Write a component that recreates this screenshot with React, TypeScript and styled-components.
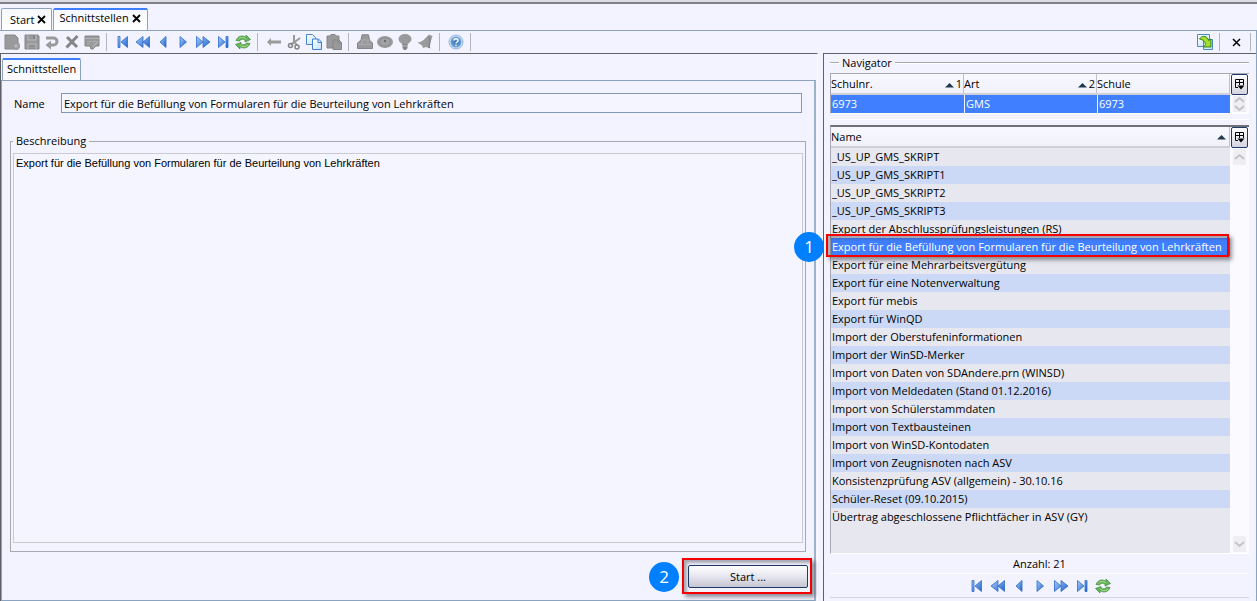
import React from "react";
import styled, { createGlobalStyle, css } from "styled-components";

const Global = createGlobalStyle`
  *, *::before, *::after { box-sizing: border-box; }
  body {
    margin: 0;
    background: #f3f3ff;
    color: #000;
    font: 11px/18px "Open Sans", "Noto Sans", "Liberation Sans", sans-serif;
  }
  button, input, textarea { font: inherit; color: inherit; border-radius: 0; }
`;

/* ---------- frame ---------- */

const Window = styled.div`
  display: flex;
  flex-direction: column;
  min-height: 100vh;
  border-top: 2px solid #dcdce4;
`;

const TabBar = styled.nav`
  display: flex;
  align-items: flex-end;
  gap: 1px;
  height: 28px;
  padding-left: 1px;
  border-top: 2px solid #80808a;
`;

const Tab = styled.div<{ $active?: boolean }>`
  display: flex;
  align-items: center;
  gap: 3px;
  height: 22px;
  padding: ${(p) => (p.$active ? "0 6px 4px 5px" : "2px 5px 2px 8px")};
  border: 1px solid #8ba3bf;
  border-bottom: 0;
  border-radius: 2px 2px 0 0;
  background: linear-gradient(#f7f8fc, #ffffff);
  ${(p) => p.$active && css`border-top: 2px solid #3d7dff;`}
`;

const PlainButton = styled.button`
  display: flex;
  align-items: center;
  justify-content: center;
  padding: 0;
  border: 0;
  background: none;
`;

const Main = styled.div`
  display: flex;
  flex-direction: column;
  flex: 1;
  border-top: 1px solid #8ba3bf;
  border-right: 1px solid #8ba3bf;
`;

const Toolbar = styled.div`
  display: flex;
  align-items: center;
  height: 22px;
  padding: 0 5px 0 2px;
`;

const ToolButton = styled(PlainButton)<{ $wide?: boolean }>`
  width: ${(p) => (p.$wide ? 21 : 20)}px;
  height: 20px;
`;

const Separator = styled.span`
  width: 1px;
  height: 18px;
  margin: 0 6px 0 4px;
  background: #b4b4bc;
  &:last-child { margin-right: 0; }
`;

const Spacer = styled.span`
  flex: 1;
`;

const Columns = styled.div`
  display: grid;
  grid-template-columns: minmax(0, 818fr) minmax(0, 433fr);
  flex: 1;
  gap: 5px;
`;

/* ---------- editor ---------- */

const Editor = styled.main`
  display: flex;
  flex-direction: column;
  padding: 4px 1px 0 0;
  border: solid #606068;
  border-width: 1px 0 0 1px;
  border-right: 1px solid #fff;
`;

const InnerTab = styled.div`
  align-self: flex-start;
  height: 22px;
  margin-left: 1px;
  padding: 0 4px;
  border: 1px solid #8ba3bf;
  border-top: 2px solid #3d7dff;
  border-bottom: 0;
  border-radius: 2px 2px 0 0;
  background: #fbfbff;
`;

const Form = styled.form`
  display: flex;
  flex-direction: column;
  flex: 1;
  padding: 12px 8px 6px;
  border: 1px solid #8ba3bf;
  border-right: 2px solid #9db1c8;
`;

const Field = styled.div`
  display: flex;
  align-items: center;
  padding: 0 4px;

  label { width: 47px; padding-top: 2px; }
  input {
    flex: 1;
    min-width: 0;
    height: 20px;
    padding: 0 2px;
    border: 1px solid #8099b8;
    background: #f5f5ff;
  }
`;

const Group = styled.fieldset`
  display: flex;
  flex-direction: column;
  flex: 1;
  min-width: 0;
  margin: 19px 0 7px;
  padding: 3px 2px 8px;
  border: 1px solid #a8a8b0;

  legend { padding: 0 3px; }
  textarea {
    display: block;
    flex: 1;
    width: 100%;
    resize: none;
    padding: 0 2px;
    border: 1px solid #cacad4;
    background: #f5f5ff;
    font-family: "Liberation Sans", "Noto Sans", sans-serif;
  }
`;

const Actions = styled.div`
  display: flex;
  justify-content: flex-end;
`;

const StartHolder = styled.div`
  position: relative;
  margin: 6px -2px 6px 0;
`;

const StartButton = styled.button`
  width: 120px;
  height: 23px;
  padding: 0;
  display: block;
  border: 1px solid #1f3a66;
  border-radius: 2px;
  background: linear-gradient(#ffffff, #e6e6f0 50%, #c6c6d2);
`;

/* ---------- callouts ---------- */

const Highlight = styled.span<{ $kind: "row" | "button" }>`
  position: absolute;
  z-index: 2;
  inset: ${(p) => (p.$kind === "row" ? "-4px 1px -1px -5px" : "-7px -4px -6px -6px")};
  border: 2px solid #f40000;
  box-shadow: 3px 3px 4px rgba(60, 60, 70, 0.55), inset 3px 3px 3px rgba(60, 60, 70, 0.4);
  pointer-events: none;
`;

const Badge = styled.span<{ $kind: "row" | "button" }>`
  position: absolute;
  z-index: 3;
  left: ${(p) => (p.$kind === "row" ? -37 : -39)}px;
  top: ${(p) => (p.$kind === "row" ? -6 : -3)}px;
  width: 30px;
  height: 30px;
  border-radius: 50%;
  background: #0080ff;
  color: #fff;
  font-size: 17px;
  line-height: 30px;
  text-align: center;
`;

/* ---------- navigator ---------- */

const Navigator = styled.aside`
  display: flex;
  flex-direction: column;
  padding: 0 7px 3px 6px;
  border: solid #606068;
  border-width: 1px 0 0 1px;
`;

const NavTitle = styled.h2`
  display: flex;
  align-items: center;
  gap: 3px;
  height: 17px;
  margin: 0 0 2px;
  font: inherit;

  &::before, &::after { content: ""; height: 2px; border-top: 1px solid #a8a8b0; background: #fff; }
  &::before { width: 9px; }
  &::after { flex: 1; }
`;

const GridFrame = styled.div<{ $grow?: boolean }>`
  display: flex;
  border: 1px solid #a8a8b0;
  border-right: 0;
  border-bottom-color: #fff;
  ${(p) =>
    p.$grow &&
    css`
      flex: 1;
      border-top: 2px solid #70707a;
      background: linear-gradient(#f3f3ff 21px, #e7e7f0 21px);
    `}
`;

const Divider = styled.hr`
  width: 100%;
  height: 1px;
  margin: 5px 0;
  border: 0;
  background: #fff;
`;

const Grid = styled.table`
  flex: 1;
  width: 100%;
  min-width: 0;
  align-self: flex-start;
  border-collapse: separate;
  border-spacing: 0;
  table-layout: fixed;

  th {
    height: 21px;
    padding: 1px 2px 0 0;
    border-bottom: 2px solid #d0d0da;
    background: linear-gradient(#f8f8ff, #f1f1fb);
    font-weight: 400;
    text-align: left;
    box-shadow: inset -1px 0 #c0c0c8;
  }
`;

const HeadCell = styled.span`
  display: flex;
  align-items: center;
  justify-content: space-between;
  height: 18px;
  svg { margin-right: 2px; }
`;

const Row = styled.tr<{ $selected?: boolean }>`
  background: #e7e7f0;
  &:nth-child(even) { background: #ccd9f6; }
  td { position: relative; height: 18px; padding: 0 1px; white-space: nowrap; }
  td + td { border-left: 1px solid #f3f3ff; }
  ${(p) => p.$selected && css`&&, &&:nth-child(even) { background: #407fff; color: #fff; }`}
`;

const Gutter = styled.div`
  display: flex;
  flex-direction: column;
  align-items: center;
  width: 19px;
  background: #fafaff;
`;

const ColumnButton = styled(PlainButton)`
  width: 17px;
  height: 21px;
  border: 1px solid #1f3a66;
  border-radius: 2px;
  background: linear-gradient(#ffffff, #d4d4e0);
`;

const ScrollArrows = styled.div`
  display: flex;
  flex: 1;
  flex-direction: column;
  justify-content: space-between;
  padding: 1px 0;
`;

const ScrollButton = styled(PlainButton)<{ $small?: boolean }>`
  width: 13px;
  height: ${(p) => (p.$small ? 8 : 16)}px;
  background: #efeff2;
`;

const Count = styled.div`
  height: 20px;
  border-bottom: 1px solid #fff;
  line-height: 20px;
  text-align: center;
`;

const Pager = styled.div`
  display: flex;
  justify-content: center;
  padding: 2px 0 1px;
  border-bottom: 1px solid #d4d4e0;
`;

/* ---------- icons ---------- */

const Svg = ({ children }: { children: React.ReactNode }) => (
  <svg width="16" height="16" viewBox="0 0 16 16" fill="none" aria-hidden="true">
    {children}
  </svg>
);

const GradientDefs = styled.svg`
  position: absolute;
`;

const Gradients = () => (
  <GradientDefs width="0" height="0" aria-hidden="true">
    <defs>
      <linearGradient id="blue" x1="0" x2="1" y1="0" y2="1">
        <stop offset="0" stopColor="#a9cdf5" />
        <stop offset="1" stopColor="#1c62cf" />
      </linearGradient>
      <linearGradient id="page" x1="0" x2="1" y1="0" y2="1">
        <stop offset="0" stopColor="#ffffff" />
        <stop offset="1" stopColor="#bfe0fb" />
      </linearGradient>
      <radialGradient id="ball">
        <stop offset="0" stopColor="#2f6fb5" />
        <stop offset="1" stopColor="#6fa3d8" />
      </radialGradient>
    </defs>
  </GradientDefs>
);

const Blue = ({ d }: { d: string }) => (
  <Svg><path d={d} fill="url(#blue)" stroke="#2c6ccb" strokeWidth="0.8" strokeLinejoin="round" /></Svg>
);

const G = "#9a9a9c";
const D = "#858587";

const icons: Record<string, React.ReactNode> = {
  neu: <Svg><path d="M1 1h10l3 3v6h-4v5H1z" fill={G} stroke={D} /><circle cx="12" cy="12" r="4" fill={G} /><path d="M12 10v4M10 12h4" stroke="#c4c4c8" /></Svg>,
  speichern: <Svg><path d="M1 1h13l1 1v13H1z" fill={G} stroke={D} /><path d="M4 1v5h8V1M4 15v-5h8v5" stroke="#b8b8bc" /><path d="M10 2v3" stroke={D} strokeWidth="2" /><path d="M5 12h6" stroke={D} /></Svg>,
  zurück: <Svg><path d="M2 4h7.500a3.500 3.500 0 0 1 0 7H6" stroke={G} strokeWidth="3" /><path d="M7 6.500v9L1.500 11z" fill={G} /></Svg>,
  löschen: <Svg><path d="M3 3 13 13M13.500 2 2.500 13.500" stroke={D} strokeWidth="3" /></Svg>,
  bearbeiten: <Svg><path d="M1 2h14v10h-3l-3 3H7l-1-3H1z" fill={G} stroke={D} /><path d="M1 4.500h14M3 7.500h4M3 10h3M8 7.500h4" stroke="#b0b0b4" /><path d="m9 13 5-6" stroke="#b0b0b4" strokeWidth="1.500" /></Svg>,
  erster: <Blue d="M3 2.500h2v11H3zM12.500 2.500v11L6 8z" />,
  schnellZurück: <Blue d="M8 2.500v11L1 8zM14.500 2.500v11L8 8z" />,
  vorheriger: <Blue d="M11 2.500v11L5 8z" />,
  nächster: <Blue d="M5 2.500v11L11.500 8z" />,
  schnellVor: <Blue d="M1.500 2.500v11L8 8zM8 2.500v11L15 8z" />,
  letzter: <Blue d="M3.500 2.500v11L10 8zM11 2.500h2v11h-2z" />,
  aktualisieren: <Svg><path d="M1 6.500C3 1.500 8 1 11 3.500V1l4.500 4.500L10 8V6C8 4.500 5.500 5 4.500 7zM15 9.500c-2 5-7 5.500-10 3V15L.500 10.500 6 8.500V10c2 1.500 4.500 1 5.500-1z" fill="#69b55b" stroke="#388735" strokeWidth="0.700" /><path d="M3 5.500C5.500 2.500 8.500 3 11 5M13 11c-2.500 2.500-5.500 2-8 0" stroke="#a2dc90" /></Svg>,
  links: <Svg><path d="M1 8l4-4v2.500h10v3H5V12z" fill={G} /></Svg>,
  ausschneiden: <Svg><path d="M8 1v7l-3 3M14 4 6 10M8 8l3 3" stroke={G} strokeWidth="2" /><circle cx="4.500" cy="11.500" r="2" stroke={D} strokeWidth="1.500" /><circle cx="11" cy="13" r="2" stroke={D} strokeWidth="1.500" /></Svg>,
  kopieren: <Svg><path d="M.500.500h6l3 3v7h-9z" fill="url(#page)" stroke="#4a86cf" /><path d="M6.500 5h6l3 3v7.500h-9z" fill="url(#page)" stroke="#3f7ecb" /><path d="M12 5v3.500h3.500" stroke="#3f7ecb" /></Svg>,
  einfügen: <Svg><path d="M1 2h3l1-1.500h4L10 2h3v4l2.500 2.500v7H7V14H1z" fill={G} stroke={D} /><path d="M7 14V6h5M12 6v3h3" stroke={D} /></Svg>,
  drucken: <Svg><path d="M4 6 5 .800h6.500L12.500 6l3 3v5.500H.500V9z" fill={G} stroke={D} /><path d="M1 10.500h14M4 6h8.500M5 6v5m6-5v5" stroke="#b0b0b4" strokeWidth="0.700" /></Svg>,
  ansicht: <Svg><ellipse cx="8" cy="8" rx="8" ry="6" fill={G} /><ellipse cx="8" cy="8" rx="5" ry="4" fill="#a4a4a8" stroke={D} strokeWidth="0.700" /><circle cx="8" cy="7" r="1.200" fill="#6a6a6c" /></Svg>,
  hinweis: <Svg><path d="M5.500 11C5 9 1.500 8 1.500 5A6.500 5 0 0 1 14.500 5c0 3-3.500 4-4 6z" fill={G} /><path d="M5.500 10h5v4l-1.500 2H7l-1.500-2z" fill={D} /><path d="M5.500 12h5" stroke="#b8b8bc" /></Svg>,
  alarm: <Svg><path d="M.500 8.500c4 0 7-3.500 10-6.500L12 .500 15.500 2l-1 3c-1.500 4-2 7-1 9.500L9 13l-3 1-1-2.500z" fill={G} /><path d="m11 3 2 2-1 9" stroke={D} strokeWidth="1.500" /></Svg>,
  hilfe: <Svg><circle cx="8" cy="8" r="7" fill="#d5e5f6" stroke="#7ca6d4" strokeWidth="0.800" /><circle cx="8" cy="8" r="5.500" fill="url(#ball)" /><path d="M6 6.500C6 4.200 10 4.200 10 6.500 10 8 8 8 8 9.500M8 10.800v1.200" stroke="#fff" strokeWidth="1.500" /></Svg>,
  export: <Svg><path d="M.500.500h12v12H.500z" fill="url(#page)" stroke="#4b8bbd" /><path d="M6.500 5.500h9v10h-9z" fill="url(#page)" stroke="#4b8bbd" /><path d="M2.500 5c2-3.500 6.500-3.500 8.500 0l.500 1.500L14 5v8H6.500l2-2.500C8 7.500 6 5.500 2.500 5z" fill="#a6dc2c" stroke="#35861c" /></Svg>,
};

const Close = ({ thin }: { thin?: boolean }) => (
  <svg width="9" height="9" viewBox="0 0 9 9" aria-hidden="true">
    <path d="m1 1 7 7M8 1 1 8" stroke="#000" strokeWidth={thin ? 1.5 : 1.8} />
  </svg>
);
const SortUp = () => (
  <svg width="9" height="5" viewBox="0 0 9 5" aria-hidden="true"><path d="M4.500 0 9 4.500H0z" fill="#1f3a50" /></svg>
);
const Chevron = ({ down }: { down?: boolean }) => (
  <svg width="11" height="8" viewBox="0 0 11 8" fill="none" aria-hidden="true">
    <path d={down ? "m1 2 4.500 4L10 2" : "m1 6 4.500-4L10 6"} stroke="#c4c4c8" strokeWidth="2" />
  </svg>
);
const ColumnsIcon = () => (
  <svg width="11" height="11" viewBox="0 0 11 11" fill="none" aria-hidden="true">
    <path d="M4 8.500H1.500v-8h8V6M1 3.500h9M5.500 0v6" stroke="#000" />
    <path d="M3.500 6.500h7L7 10.500z" fill="#000" />
  </svg>
);

const Tools = ({ names, disabled, wide }: { names: string[]; disabled?: boolean; wide?: boolean }) => (
  <>
    {names.map((n) => (
      <ToolButton key={n} type="button" aria-label={n} disabled={disabled} $wide={wide}>{icons[n]}</ToolButton>
    ))}
  </>
);

const pagerNames = ["erster", "schnellZurück", "vorheriger", "nächster", "schnellVor", "letzter", "aktualisieren"];

const selected = "Export für die Befüllung von Formularen für die Beurteilung von Lehrkräften";
const scripts = [
  "_US_UP_GMS_SKRIPT",
  "_US_UP_GMS_SKRIPT1",
  "_US_UP_GMS_SKRIPT2",
  "_US_UP_GMS_SKRIPT3",
  "Export der Abschlussprüfungsleistungen (RS)",
  selected,
  "Export für eine Mehrarbeitsvergütung",
  "Export für eine Notenverwaltung",
  "Export für mebis",
  "Export für WinQD",
  "Import der Oberstufeninformationen",
  "Import der WinSD-Merker",
  "Import von Daten von SDAndere.prn (WINSD)",
  "Import von Meldedaten (Stand 01.12.2016)",
  "Import von Schülerstammdaten",
  "Import von Textbausteinen",
  "Import von WinSD-Kontodaten",
  "Import von Zeugnisnoten nach ASV",
  "Konsistenzprüfung ASV (allgemein) - 30.10.16",
  "Schüler-Reset (09.10.2015)",
  "Übertrag abgeschlossene Pflichtfächer in ASV (GY)",
];

export default function App() {
  return (
    <Window>
      <Global />
      <Gradients />
      <TabBar>
        <Tab>Start<PlainButton aria-label="Start schließen"><Close /></PlainButton></Tab>
        <Tab $active>Schnittstellen<PlainButton aria-label="Schnittstellen schließen"><Close /></PlainButton></Tab>
      </TabBar>
      <Main>
        <Toolbar>
          <Tools names={["neu", "speichern", "zurück", "löschen", "bearbeiten"]} disabled />
          <Separator />
          <Tools names={pagerNames} />
          <Separator />
          <Tools names={["links", "ausschneiden", "kopieren", "einfügen"]} />
          <Separator />
          <Tools names={["drucken", "ansicht", "hinweis", "alarm"]} disabled />
          <Separator />
          <Tools names={["hilfe"]} />
          <Separator />
          <Spacer />
          <Tools names={["export"]} />
          <Separator />
          <ToolButton type="button" aria-label="Schließen"><Close thin /></ToolButton>
          <Separator />
        </Toolbar>
        <Columns>
          <Editor>
            <InnerTab>Schnittstellen</InnerTab>
            <Form onSubmit={(e) => e.preventDefault()}>
              <Field>
                <label htmlFor="name">Name</label>
                <input id="name" defaultValue={selected} />
              </Field>
              <Group>
                <legend>Beschreibung</legend>
                <textarea
                  aria-label="Beschreibung"
                  defaultValue="Export für die Befüllung von Formularen für de Beurteilung von Lehrkräften"
                />
              </Group>
              <Actions>
                <StartHolder>
                  <StartButton type="submit">Start ...</StartButton>
                  <Highlight $kind="button" />
                  <Badge $kind="button">2</Badge>
                </StartHolder>
              </Actions>
            </Form>
          </Editor>
          <Navigator>
            <NavTitle>Navigator</NavTitle>
            <GridFrame>
              <Grid>
                <thead>
                  <tr>
                    <th><HeadCell>Schulnr.<span><SortUp />1</span></HeadCell></th>
                    <th><HeadCell>Art<span><SortUp />2</span></HeadCell></th>
                    <th><HeadCell>Schule</HeadCell></th>
                  </tr>
                </thead>
                <tbody>
                  <Row $selected><td>6973</td><td>GMS</td><td>6973</td></Row>
                </tbody>
              </Grid>
              <Gutter>
                <ColumnButton type="button" aria-label="Spalten"><ColumnsIcon /></ColumnButton>
                <ScrollArrows>
                  <ScrollButton $small type="button" aria-label="Nach oben"><Chevron /></ScrollButton>
                  <ScrollButton $small type="button" aria-label="Nach unten"><Chevron down /></ScrollButton>
                </ScrollArrows>
              </Gutter>
            </GridFrame>
            <Divider />
            <GridFrame $grow>
              <Grid>
                <thead>
                  <tr><th><HeadCell>Name<SortUp /></HeadCell></th></tr>
                </thead>
                <tbody>
                  {scripts.map((s) => (
                    <Row key={s} $selected={s === selected}>
                      <td>
                        {s}
                        {s === selected && (
                          <>
                            <Highlight $kind="row" />
                            <Badge $kind="row">1</Badge>
                          </>
                        )}
                      </td>
                    </Row>
                  ))}
                </tbody>
              </Grid>
              <Gutter>
                <ColumnButton type="button" aria-label="Spalten"><ColumnsIcon /></ColumnButton>
                <ScrollArrows>
                  <ScrollButton type="button" aria-label="Nach oben"><Chevron /></ScrollButton>
                  <ScrollButton type="button" aria-label="Nach unten"><Chevron down /></ScrollButton>
                </ScrollArrows>
              </Gutter>
            </GridFrame>
            <Count>Anzahl: 21</Count>
            <Pager><Tools names={pagerNames} wide /></Pager>
          </Navigator>
        </Columns>
      </Main>
    </Window>
  );
}
